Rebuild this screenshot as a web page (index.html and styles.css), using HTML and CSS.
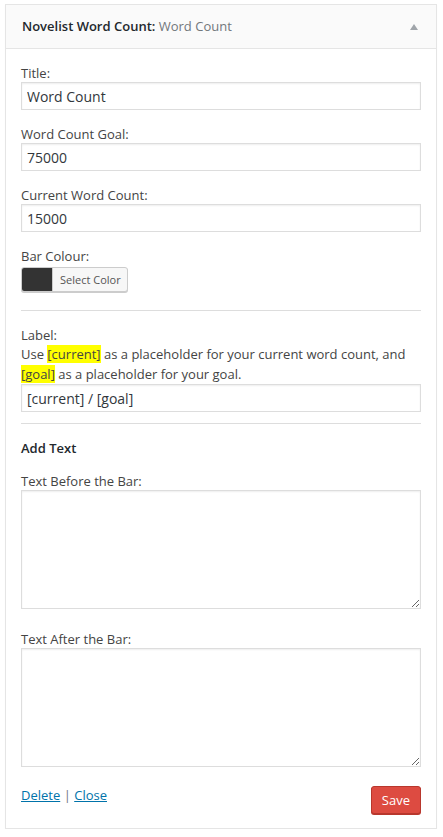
FILE: index.html
```html
<!DOCTYPE html>
<html>
<head>
<meta charset="utf-8">
<link rel="stylesheet" href="styles.css">
</head>
<body>
<div class="widget">
  <div class="widget-top">
    <h3 class="widget-title">Novelist Word Count: <span class="in-title">Word Count</span></h3>
    <span class="arrow"></span>
  </div>
  <div class="widget-inside">
    <div class="field">
      <label class="lbl">Title:</label>
      <input class="widefat" type="text" value="Word Count">
    </div>
    <div class="field">
      <label class="lbl">Word Count Goal:</label>
      <input class="widefat" type="text" value="75000">
    </div>
    <div class="field">
      <label class="lbl">Current Word Count:</label>
      <input class="widefat" type="text" value="15000">
    </div>
    <div class="field color-field">
      <label class="lbl">Bar Colour:</label>
      <button class="color-btn" type="button"><span class="swatch"></span><span class="color-text">Select Color</span></button>
    </div>
    <hr class="sep">
    <div class="field">
      <label class="lbl">Label:</label>
      <p class="desc">Use <span class="hl">[current]</span> as a placeholder for your current word count, and <span class="hl">[goal]</span> as a placeholder for your goal.</p>
      <input class="widefat" type="text" value="[current] / [goal]">
    </div>
    <hr class="sep sep2">
    <h4 class="section">Add Text</h4>
    <div class="field area-field">
      <label class="lbl">Text Before the Bar:</label>
      <textarea class="widefat area"></textarea>
    </div>
    <div class="field area-field last">
      <label class="lbl">Text After the Bar:</label>
      <textarea class="widefat area"></textarea>
    </div>
    <div class="actions">
      <div class="links"><a href="#">Delete</a> <span class="pipe">|</span> <a href="#">Close</a></div>
      <button class="save" type="button">Save</button>
    </div>
  </div>
</div>
</body>
</html>
```

FILE: styles.css
```css
* { box-sizing: border-box; }
html, body { margin: 0; background: #fff; }
body {
  padding: 4px 6px 0 5px;
  font-family: "Open Sans", "Liberation Sans", sans-serif;
  font-size: 13px;
  color: #444;
}
.widget {
  border: 1px solid #e5e5e5;
  box-shadow: 0 1px 1px rgba(0,0,0,0.04);
  background: #fff;
}
.widget-top {
  height: 44px;
  background: #fafafa;
  border-bottom: 1px solid #e5e5e5;
  display: flex;
  align-items: center;
  justify-content: space-between;
  padding: 0 16px 0 16px;
}
.widget-title {
  margin: 0;
  font-size: 13px;
  font-weight: 600;
  color: #23282d;
  line-height: 1;
}
.in-title { color: #72777c; font-weight: 400; }
.arrow {
  width: 0; height: 0;
  border-left: 4px solid transparent;
  border-right: 4px solid transparent;
  border-bottom: 6px solid #a0a5aa;
  margin-right: 2px;
}
.widget-inside { padding: 15px 15px 14px; }
.field { margin-bottom: 15px; }
.lbl { display: block; line-height: 18px; color: #444; }
.widefat {
  display: block;
  width: 100%;
  height: 28px;
  border: 1px solid #ddd;
  box-shadow: inset 0 1px 2px rgba(0,0,0,0.07);
  background: #fff;
  color: #32373c;
  font-family: "Open Sans", "Liberation Sans", sans-serif;
  font-size: 14px;
  padding: 0 5px;
  margin: 0;
  outline: none;
}
.area { height: 119px; resize: vertical; }
.area-field { margin-bottom: 21px; }
.area-field.last { margin-bottom: 19px; }
.color-field { margin-bottom: 18px; }
.color-btn {
  display: flex;
  height: 25px;
  margin-top: 2px;
  padding: 0;
  border: 1px solid #ccc;
  border-radius: 3px;
  background: #f7f7f7;
  box-shadow: 0 1px 0 #ccc;
  overflow: hidden;
  cursor: pointer;
  font-family: "Open Sans", "Liberation Sans", sans-serif;
}
.swatch { width: 30px; background: #333; height: 100%; }
.color-text {
  padding: 0 6px 0 7px;
  font-size: 11px;
  line-height: 23px;
  color: #555;
  border-left: 1px solid #ccc;
}
.sep { border: 0; border-top: 1px solid #ddd; margin: 0 0 15px; }
.sep2 { margin-top: -4px; }
.desc { margin: 0; line-height: 20px; }
.hl { background: #ffff00; }
.section {
  margin: 0 0 15px;
  font-size: 13px;
  font-weight: 600;
  line-height: 18px;
  color: #23282d;
}
.actions {
  display: flex;
  justify-content: space-between;
  align-items: flex-start;
}
.links { line-height: 18px; }
.links a { color: #0073aa; text-decoration: underline; }
.pipe { color: #72777c; }
.save {
  height: 28px;
  padding: 0 10px;
  background: #dd4b41;
  border: 1px solid #b8372d;
  border-radius: 3px;
  box-shadow: 0 1px 0 #b8372d;
  color: #fff;
  font-family: "Open Sans", "Liberation Sans", sans-serif;
  font-size: 13px;
  line-height: 26px;
  margin: 0;
  cursor: pointer;
}
```
